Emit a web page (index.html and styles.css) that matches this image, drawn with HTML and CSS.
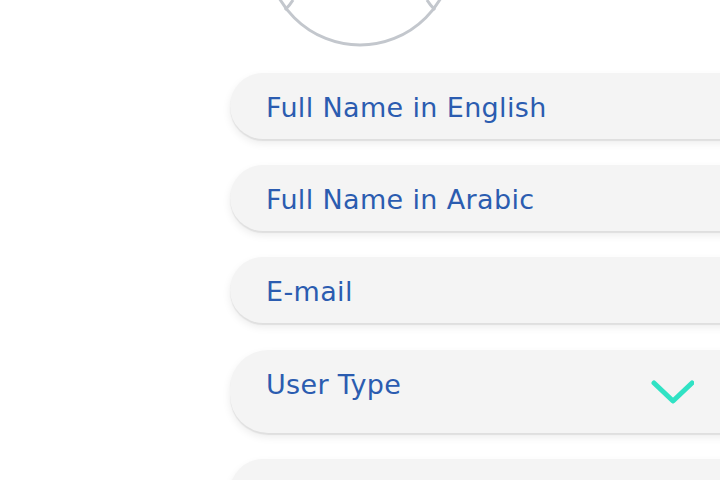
FILE: index.html
```html
<!DOCTYPE html>
<html>
<head>
<meta charset="utf-8">
<link rel="stylesheet" href="styles.css">
</head>
<body>
<div class="page">
  <svg class="avatar" width="200" height="50" viewBox="0 0 200 50">
    <circle cx="100" cy="-48" r="93" fill="none" stroke="#c3c7cd" stroke-width="3"/>
    <path d="M33 0 Q30 5 25 10" fill="none" stroke="#c3c7cd" stroke-width="3"/>
    <path d="M167 0 Q170 5 175 10" fill="none" stroke="#c3c7cd" stroke-width="3"/>
  </svg>
  <form class="form">
    <div class="field"><span class="label">Full Name in English</span></div>
    <div class="field"><span class="label">Full Name in Arabic</span></div>
    <div class="field"><span class="label">E-mail</span></div>
    <div class="field field-select">
      <span class="label">User Type</span>
      <svg class="chevron" width="44" height="26" viewBox="0 0 44 26">
        <polyline points="4,4 23,22 42,4" fill="none" stroke="#30e2c4" stroke-width="5" stroke-linecap="round" stroke-linejoin="round"/>
      </svg>
    </div>
    <div class="field"><span class="label"></span></div>
  </form>
</div>
</body>
</html>
```
FILE: styles.css
```css
html, body {
  margin: 0;
  padding: 0;
  background: #ffffff;
  overflow: hidden;
}
.page {
  width: 720px;
  height: 480px;
  overflow: hidden;
  font-family: "DejaVu Sans", "Liberation Sans", sans-serif;
}
.avatar {
  display: block;
  margin-left: 260px;
}
.form {
  margin: 23px 0 0 230px;
  width: 540px;
  display: flex;
  flex-direction: column;
  gap: 26px;
}
.field {
  height: 66px;
  box-sizing: border-box;
  background: #f4f4f4;
  border-radius: 34px;
  box-shadow: 0 2px 1px rgba(0, 0, 0, 0.07), 0 4px 8px rgba(0, 0, 0, 0.08);
  padding: 21px 0 0 36px;
  display: flex;
  align-items: flex-start;
  justify-content: space-between;
}
.field-select {
  height: 83px;
  margin-top: 1px;
  border-radius: 38px;
}
.label {
  font-size: 27px;
  line-height: 27px;
  letter-spacing: 0.35px;
  color: #2b5cb0;
}
.chevron {
  display: block;
  margin: 8px 76px 0 0;
}
```
